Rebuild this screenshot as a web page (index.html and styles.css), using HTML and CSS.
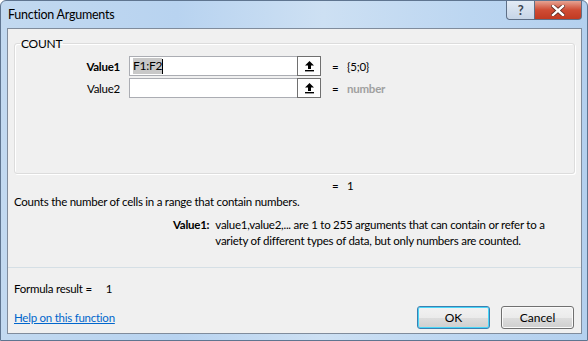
FILE: index.html
```html
<!DOCTYPE html>
<html lang="en">
	<head>
		<meta charset="UTF-8" />
		<title>Function Arguments</title>
		<link rel="stylesheet" href="styles.css">
	</head>
	<body>
		<div class="window">
			<div class="titlebar">
				<span class="title">Function Arguments</span>
				<div class="caption-buttons">
					<div class="cap-btn help">?</div>
					<div class="cap-btn close">
						<svg width="14" height="11" viewBox="0 0 14 11">
							<path d="M2 1 L12 10 M12 1 L2 10" stroke="#5a2a22" stroke-width="4" stroke-linecap="square"/>
							<path d="M2 1 L12 10 M12 1 L2 10" stroke="#fff" stroke-width="2.4" stroke-linecap="square"/>
						</svg>
					</div>
				</div>
			</div>
			<div class="client">
				<fieldset class="group">
					<legend>COUNT</legend>
					<div class="arg-row">
						<label class="arg-name bold">Value1</label>
						<div class="arg-input"><span class="sel">F1:F2</span><span class="caret"></span></div>
						<div class="ref-btn">
							<svg width="11" height="12" viewBox="0 0 11 12"><path d="M5.5 1 L10 5.5 H7 V9 H4 V5.5 H1 Z" fill="#000"/><rect x="1" y="10" width="9" height="1.4" fill="#000"/></svg>
						</div>
						<span class="eq">=</span>
						<span class="arg-val">{5;0}</span>
					</div>
					<div class="arg-row">
						<label class="arg-name">Value2</label>
						<div class="arg-input"></div>
						<div class="ref-btn">
							<svg width="11" height="12" viewBox="0 0 11 12"><path d="M5.5 1 L10 5.5 H7 V9 H4 V5.5 H1 Z" fill="#000"/><rect x="1" y="10" width="9" height="1.4" fill="#000"/></svg>
						</div>
						<span class="eq">=</span>
						<span class="arg-val hint">number</span>
					</div>
				</fieldset>
				<div class="result-line"><span class="eq">=</span><span>1</span></div>
				<p class="desc">Counts the number of cells in a range that contain numbers.</p>
				<div class="arg-help">
					<span class="bold">Value1:</span>
					<p>value1,value2,... are 1 to 255 arguments that can contain or refer to a variety of different types of data, but only numbers are counted.</p>
				</div>
				<div class="separator"></div>
				<p class="formula">Formula result =<span class="formula-val">1</span></p>
				<div class="footer">
					<a class="help-link" href="#">Help on this function</a>
					<div class="buttons">
						<button class="btn default">OK</button>
						<button class="btn">Cancel</button>
					</div>
				</div>
			</div>
		</div>
	</body>
</html>
```
FILE: styles.css
```css
* {
	padding: 0;
	margin: 0;
	box-sizing: border-box;
}
body {
	width: 588px;
	height: 341px;
	overflow: hidden;
	background: #fff;
	font-family: Lato, "Noto Sans", sans-serif;
	font-size: 11.5px;
	letter-spacing: -0.25px;
	color: #000;
}
.window {
	width: 588px;
	height: 341px;
	padding: 0 5px 6px 6px;
	border-radius: 6px 6px 0 0;
	border: 1px solid #5f7590;
	background: linear-gradient(90deg, #c2d9f0 0%, #b8d3f0 30%, #cde0f3 55%, #bcd6f1 80%, #b4d0ee 100%);
	display: flex;
	flex-direction: column;
}
.titlebar {
	height: 27px;
	display: flex;
	align-items: flex-start;
	justify-content: space-between;
}
.title {
	margin-top: 6px;
	margin-left: 1px;
	font-size: 12.5px;
	color: #000;
}
.caption-buttons {
	display: flex;
	margin-right: 0;
}
.cap-btn {
	height: 19px;
	border: 1px solid #5e6f86;
	border-top: none;
	display: flex;
	align-items: center;
	justify-content: center;
}
.help {
	width: 29px;
	border-radius: 0 0 0 4px;
	background: linear-gradient(#e3ebf5, #c6d5e7);
	color: #3c4450;
	font-weight: bold;
	font-size: 13px;
}
.close {
	width: 47px;
	border-left: none;
	border-radius: 0 0 4px 0;
	background: linear-gradient(#e6a392, #cf4c34 50%, #c13a22);
}
.client {
	flex: 1;
	background: #f0f0f0;
	border: 1px solid #808c9c;
	padding: 7px 6px 0 6px;
	display: flex;
	flex-direction: column;
}
.group {
	border: 1px solid #dcdcdc;
	border-radius: 3px;
	box-shadow: inset 1px 1px 0 #fff, 1px 1px 0 #fff;
	height: 138px;
	padding: 4px 0 0 0;
	margin-bottom: 4px;
}
.group legend {
	margin-left: 5px;
	padding: 0 1px;
	font-size: 12px;
}
.arg-row {
	display: flex;
	align-items: center;
	height: 22px;
}
.arg-name {
	width: 114px;
	text-align: right;
	padding-right: 9px;
}
.bold {
	font-weight: bold;
}
.arg-input {
	width: 168px;
	height: 20px;
	background: #fff;
	border: 1px solid #abadb3;
	border-right: none;
	display: flex;
	align-items: center;
	padding-left: 3px;
}
.sel {
	background: #c8c8c8;
	line-height: 16px;
	font-size: 12px;
}
.caret {
	width: 1px;
	height: 15px;
	background: #000;
}
.ref-btn {
	width: 24px;
	height: 20px;
	border: 1px solid #707070;
	background: #fdfdfd;
	box-shadow: inset 0 0 0 1px #fff;
	display: flex;
	align-items: center;
	justify-content: center;
}
.eq {
	margin-left: 11px;
	width: 15px;
}
.arg-val {
	color: #000;
}
.hint {
	color: #a0a0a0;
	font-weight: bold;
}
.result-line {
	display: flex;
	margin-left: 307px;
	height: 14px;
	align-items: center;
}
.desc {
	margin-top: 2px;
	line-height: 16px;
}
.arg-help {
	display: flex;
	margin-top: 7px;
	margin-left: 159px;
	gap: 6px;
	line-height: 16px;
}
.arg-help p {
	width: 356px;
}
.separator {
	margin: 18px -6px 0 -6px;
	height: 1px;
	background: #d5dfe5;
}
.formula {
	margin-top: 13px;
	line-height: 16px;
}
.formula-val {
	margin-left: 14px;
}
.footer {
	margin-top: 9px;
	display: flex;
	justify-content: space-between;
	align-items: center;
}
.help-link {
	color: #0066cc;
	text-decoration: underline;
}
.buttons {
	display: flex;
	gap: 11px;
	margin-right: 1px;
}
.btn {
	width: 73px;
	height: 23px;
	font-family: inherit;
	font-size: 12px;
	border: 1px solid #707070;
	border-radius: 3px;
	background: linear-gradient(#f2f2f2 0%, #ebebeb 50%, #dddddd 51%, #cfcfcf 100%);
	box-shadow: inset 0 0 0 1px #fafafa;
}
.btn.default {
	border-color: #3c7fb1;
	box-shadow: inset 0 0 0 1px #48d6f8;
}
```
